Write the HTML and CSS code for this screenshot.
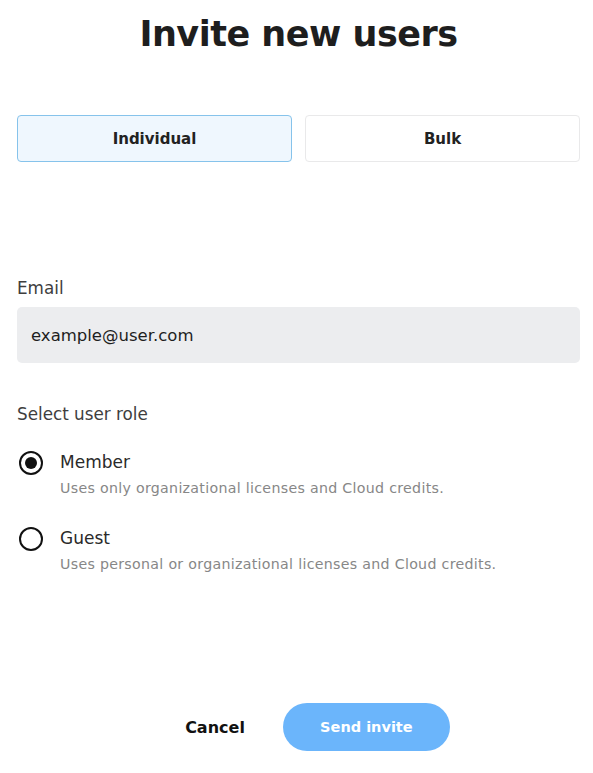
FILE: index.html
```html
<!DOCTYPE html>
<html>
<head>
<meta charset="utf-8">
<link rel="stylesheet" href="styles.css">
</head>
<body>
<div class="page">
  <h1 class="title">Invite new users</h1>
  <div class="tabs">
    <div class="tab tab-active">Individual</div>
    <div class="tab">Bulk</div>
  </div>
  <div class="field">
    <div class="label">Email</div>
    <div class="input">example@user.com</div>
  </div>
  <div class="roles">
    <div class="label">Select user role</div>
    <div class="role">
      <span class="radio radio-on"><span class="dot"></span></span>
      <div class="role-text">
        <div class="role-name">Member</div>
        <div class="role-desc">Uses only organizational licenses and Cloud credits.</div>
      </div>
    </div>
    <div class="role">
      <span class="radio"></span>
      <div class="role-text">
        <div class="role-name">Guest</div>
        <div class="role-desc">Uses personal or organizational licenses and Cloud credits.</div>
      </div>
    </div>
  </div>
  <div class="actions">
    <button class="btn-cancel">Cancel</button>
    <button class="btn-send">Send invite</button>
  </div>
</div>
</body>
</html>
```
FILE: styles.css
```css
* { box-sizing: border-box; }
body {
  margin: 0;
  background: #ffffff;
  font-family: "DejaVu Sans", "Open Sans", sans-serif;
  color: #222;
}
.page {
  width: 593px;
  height: 773px;
  padding: 0 13px 0 17px;
  display: flex;
  flex-direction: column;
}
.title {
  margin: 11px 0 0 0;
  font-size: 35px;
  line-height: 46px;
  font-weight: 700;
  text-align: center;
  color: #1e1e1e;
  letter-spacing: -0.5px;
}
.tabs {
  margin-top: 58px;
  display: flex;
  gap: 13px;
}
.tab {
  flex: 1;
  height: 47px;
  border: 1px solid #e9e9ea;
  border-radius: 4px;
  display: flex;
  align-items: center;
  justify-content: center;
  font-size: 15px;
  font-weight: 700;
  color: #222;
  background: #fff;
}
.tab-active {
  background: #eff7fe;
  border-color: #86c3eb;
}
.field { margin-top: 116px; }
.label {
  font-size: 16.8px;
  line-height: 20px;
  color: #3e3e3e;
}
.input {
  margin-top: 9px;
  height: 56px;
  background: #ecedef;
  border-radius: 5px;
  padding: 0 14px;
  display: flex;
  align-items: center;
  font-size: 16.5px;
  color: #1e1e1e;
}
.roles { margin-top: 41px; }
.role {
  display: flex;
  align-items: flex-start;
  margin-top: 26px;
}
.role + .role { margin-top: 28px; }
.radio {
  width: 24px;
  height: 24px;
  border: 2.5px solid #111;
  border-radius: 50%;
  margin: 1px 17px 0 2px;
  display: flex;
  align-items: center;
  justify-content: center;
  flex-shrink: 0;
}
.dot {
  width: 12px;
  height: 12px;
  border-radius: 50%;
  background: #111;
}
.role-name {
  font-size: 17px;
  line-height: 24px;
  color: #2a2a2a;
}
.role-desc {
  margin-top: 4px;
  font-size: 14.2px;
  line-height: 20px;
  letter-spacing: 0.3px;
  color: #878787;
}
.actions {
  margin-top: auto;
  margin-bottom: 22px;
  padding-left: 38px;
  display: flex;
  justify-content: center;
  align-items: center;
  gap: 38px;
}
.btn-cancel {
  border: none;
  background: none;
  font-family: inherit;
  font-size: 16px;
  font-weight: 700;
  color: #111;
  padding: 0;
}
.btn-send {
  width: 167px;
  height: 48px;
  border: none;
  border-radius: 24px;
  background: #6bb5fb;
  color: #fff;
  font-family: inherit;
  font-size: 14.5px;
  font-weight: 700;
}
```
